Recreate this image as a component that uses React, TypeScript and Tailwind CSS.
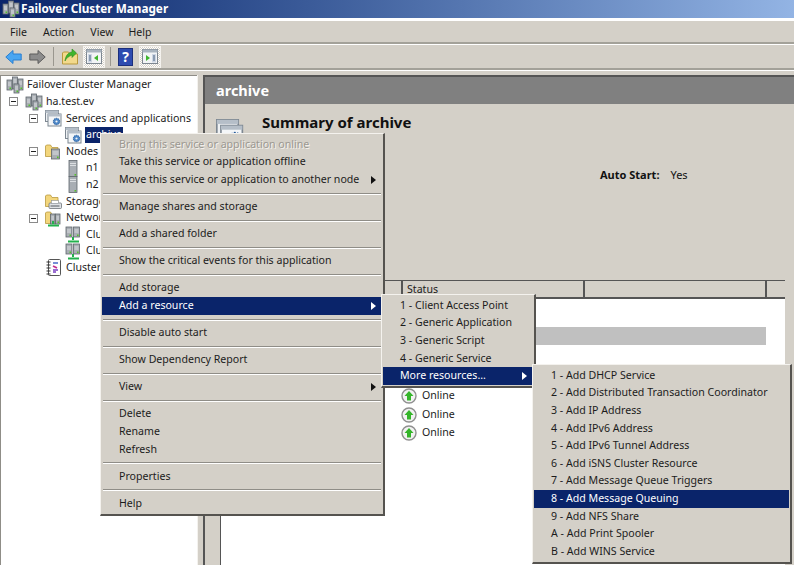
const font = "font-['Noto_Sans','Liberation_Sans',Arial,sans-serif]"

function Arrow({ white }: { white?: boolean }) {
  return (
    <svg width="5" height="8" viewBox="0 0 5 8" className="shrink-0">
      <path d="M0 0L5 4L0 8Z" fill={white ? "#ffffff" : "#111111"} />
    </svg>
  )
}

function ServerBlock({ x, y, w = 6, h = 13 }: { x: number; y: number; w?: number; h?: number }) {
  return (
    <g>
      <rect x={x} y={y} width={w} height={h} fill="#a9aeb4" stroke="#5f666d" strokeWidth="0.8" />
      <path d={`M${x + 1} ${y + 3}h${w - 2}M${x + 1} ${y + 5}h${w - 2}`} stroke="#e8eaec" strokeWidth="0.8" />
      <rect x={x + w - 2.5} y={y + h - 2.5} width="1.6" height="1.6" fill="#55c22c" />
    </g>
  )
}

function ClusterIcon() {
  return (
    <svg width="18" height="18" viewBox="0 0 18 18" className="shrink-0">
      <ServerBlock x={1} y={4} w={5} h={10} />
      <ServerBlock x={6.5} y={1} w={5} h={12} />
      <ServerBlock x={12} y={3} w={5} h={11} />
      <ServerBlock x={8} y={8} w={5} h={9} />
    </svg>
  )
}

function WindowGear({ size = 17 }: { size?: number }) {
  return (
    <svg width={size} height={size} viewBox="0 0 17 17" className="shrink-0">
      <rect x="0.5" y="0.5" width="13" height="11" fill="#eef1f4" stroke="#7d8791" />
      <rect x="0.5" y="0.5" width="13" height="2.5" fill="#b5bec8" />
      <rect x="3" y="4" width="13" height="12" fill="#f4f6f8" stroke="#7d8791" />
      <rect x="3" y="4" width="13" height="2.5" fill="#b5bec8" />
      <circle cx="11.5" cy="11.5" r="3.2" fill="#4c86c6" stroke="#2a5f9e" strokeDasharray="1.2 0.8" />
      <circle cx="11.5" cy="11.5" r="1.1" fill="#f4f6f8" />
    </svg>
  )
}

function Folder() {
  return (
    <path d="M0.5 3V13.5H13V4.5H7L5.5 2H1.5Z" fill="#f3d67c" stroke="#b9993f" strokeWidth="0.8" />
  )
}

function FolderServer() {
  return (
    <svg width="16" height="17" viewBox="0 0 16 17" className="shrink-0">
      <Folder />
      <ServerBlock x={6.5} y={6} w={8} h={10} />
    </svg>
  )
}

function TallServer() {
  return (
    <svg width="10" height="17" viewBox="0 0 10 17" className="shrink-0">
      <ServerBlock x={1} y={0.5} w={8} h={16} />
    </svg>
  )
}

function FolderPrinter() {
  return (
    <svg width="17" height="17" viewBox="0 0 17 17" className="shrink-0">
      <Folder />
      <rect x="4" y="10" width="12.5" height="5.5" rx="1" fill="#dfe2e5" stroke="#6d7379" strokeWidth="0.8" />
      <rect x="6.5" y="7.5" width="7" height="3" fill="#ffffff" stroke="#8d9399" strokeWidth="0.6" />
      <path d="M5.5 13h9" stroke="#555b60" strokeWidth="1" />
    </svg>
  )
}

function NetPair({ folder }: { folder?: boolean }) {
  return (
    <svg width="16" height="17" viewBox="0 0 16 17" className="shrink-0">
      {folder ? <Folder /> : null}
      <ServerBlock x={folder ? 5.5 : 1} y={folder ? 4 : 1} w={folder ? 4.5 : 6} h={10} />
      <ServerBlock x={folder ? 10.5 : 8.5} y={folder ? 4 : 1} w={folder ? 4.5 : 6} h={10} />
      <path d="M8 11V14M3 15.5H14" stroke="#22b14c" strokeWidth="2" />
    </svg>
  )
}

function Notebook() {
  return (
    <svg width="15" height="17" viewBox="0 0 15 17" className="shrink-0">
      <rect x="2.5" y="0.5" width="12" height="16" rx="1" fill="#ffffff" stroke="#555555" />
      <path d="M0.5 3h4M0.5 6h4M0.5 9h4M0.5 12h4M0.5 15h4" stroke="#333333" />
      <path d="M7 4h5" stroke="#3b5fc4" strokeWidth="1.4" />
      <path d="M7 7l4 2" stroke="#c42b8e" strokeWidth="1.6" />
      <path d="M7 11h5M7 13h3" stroke="#7a3fc4" strokeWidth="1.4" />
    </svg>
  )
}

function Expander() {
  return (
    <span className="flex h-[9px] w-[9px] shrink-0 items-center justify-center border border-[#8a8a8a] bg-white">
      <span className="h-px w-[5px] bg-[#222222]" />
    </span>
  )
}

function PanelButton({ right }: { right?: boolean }) {
  return (
    <div className="flex h-[22px] w-[22px] items-center justify-center border border-[#f4f2ee] bg-[repeating-conic-gradient(#ffffff_0_25%,#d4d0c8_0_50%)] bg-[length:2px_2px]">
      <svg width="16" height="15" viewBox="0 0 16 15">
        <rect x="0.5" y="0.5" width="15" height="14" fill="#f2f4f6" stroke="#7d8791" />
        <rect x="0.5" y="0.5" width="15" height="3" fill="#a9b4bf" />
        {right ? (
          <>
            <path d="M4 6l4 3l-4 3Z" fill="#3fb52e" />
            <rect x="10" y="5" width="4" height="8.5" fill="#cdd6e4" />
            <path d="M11 7h2M11 9h2M11 11h2" stroke="#48607f" />
          </>
        ) : (
          <>
            <rect x="2" y="5" width="4" height="8.5" fill="#cdd6e4" />
            <path d="M3 7h2M3 9h2M3 11h2" stroke="#48607f" />
            <path d="M12 6l-4 3l4 3Z" fill="#3fb52e" />
          </>
        )}
      </svg>
    </div>
  )
}

function Toolbar() {
  return (
    <div className="flex h-[22px] items-center pl-[5px]">
      <svg width="17" height="16" viewBox="0 0 17 16">
        <path d="M0.8 8L8 1.5V5H16.2V11H8V14.5Z" fill="#49a6f2" stroke="#2a7fd0" />
      </svg>
      <svg width="17" height="16" viewBox="0 0 17 16" className="ml-[7px]">
        <path d="M16.2 8L9 1.5V5H0.8V11H9V14.5Z" fill="#8c8c8c" stroke="#5c5c5c" />
      </svg>
      <div className="ml-[7px] h-[19px] w-px bg-[#9a978f]" />
      <svg width="16" height="17" viewBox="0 0 16 17" className="ml-[8px]">
        <path d="M0.5 5V16H15.5V6H8L6.5 4H1.5Z" fill="#f2d98c" stroke="#b9993f" />
        <path d="M3 13C5 9 8 8 10 7V9.5L14.5 5L10 1V4C6 4.5 3.5 8 3 13Z" fill="#3fb52e" stroke="#2c8a1e" strokeWidth="0.6" />
      </svg>
      <div className="ml-[5px]">
        <PanelButton />
      </div>
      <div className="ml-[5px] h-[19px] w-px bg-[#9a978f]" />
      <div className="ml-[7px] flex h-[18px] w-[15px] items-center justify-center border border-[#1c2f7c] bg-[#2e4bb0] text-[14px] font-bold leading-none text-white">
        ?
      </div>
      <div className="ml-[6px]">
        <PanelButton right />
      </div>
    </div>
  )
}

const tree = [
  { label: "Failover Cluster Manager", icon: <ClusterIcon />, pad: "pl-[5px]", gap: "ml-[3px]" },
  { label: "ha.test.ev", icon: <ClusterIcon />, pad: "pl-[8px]", exp: true, gap: "ml-[3px]" },
  { label: "Services and applications", icon: <WindowGear />, pad: "pl-[28px]", exp: true, gap: "ml-[4px]" },
  { label: "archive", icon: <WindowGear />, pad: "pl-[64px]", selected: true, gap: "ml-[3px]" },
  { label: "Nodes", icon: <FolderServer />, pad: "pl-[28px]", exp: true, gap: "ml-[5px]" },
  { label: "n1", icon: <TallServer />, pad: "pl-[67px]", gap: "ml-[8px]" },
  { label: "n2", icon: <TallServer />, pad: "pl-[67px]", gap: "ml-[8px]" },
  { label: "Storage", icon: <FolderPrinter />, pad: "pl-[44px]", gap: "ml-[4px]" },
  { label: "Networks", icon: <NetPair folder />, pad: "pl-[28px]", exp: true, gap: "ml-[5px]" },
  { label: "Cluster Network 1", icon: <NetPair />, pad: "pl-[64px]", gap: "ml-[5px]" },
  { label: "Cluster Network 2", icon: <NetPair />, pad: "pl-[64px]", gap: "ml-[5px]" },
  { label: "Cluster Events", icon: <Notebook />, pad: "pl-[45px]", gap: "ml-[5px]" },
]

function Tree() {
  return (
    <div className="h-full w-[197px] shrink-0 overflow-hidden border-l border-t border-[#8f8d87] bg-white pt-px text-[10.6px] text-[#1c1c1c]">
      {tree.map((t) => (
        <div key={t.label} className={`flex h-[16.6px] items-center whitespace-nowrap ${t.pad}`}>
          {t.exp ? (
            <>
              <Expander />
              <span className="w-[7px] shrink-0" />
            </>
          ) : null}
          {t.icon}
          <span className={`${t.gap} ${t.selected ? "bg-[#0a246a] px-px text-white" : ""}`}>{t.label}</span>
        </div>
      ))}
    </div>
  )
}

function Summary() {
  return (
    <div className="h-[176px] shrink-0 pl-[11px] pt-[11px] text-[#111111]">
      <div className="flex">
        <div className="mt-[4px]">
          <WindowGear size={28} />
        </div>
        <h2 className="ml-[18px] text-[15px] font-bold leading-[15px]">Summary of archive</h2>
      </div>
      <div className="mt-[20px] flex pl-[384px] text-[11px]">
        <span className="font-bold">Auto Start:</span>
        <span className="ml-[11px]">Yes</span>
      </div>
    </div>
  )
}

function OnlineRow() {
  return (
    <div className="flex h-[18.5px] items-center pl-[180px] text-[10.6px] text-[#1c1c1c]">
      <svg width="16" height="16" viewBox="0 0 16 16" className="shrink-0">
        <circle cx="8" cy="8" r="7" fill="#f2f2f2" stroke="#8f8f8f" strokeWidth="1.4" />
        <path d="M8 3L12.5 8H10V12.5H6V8H3.5Z" fill="#35b52a" />
      </svg>
      <span className="ml-[5px]">Online</span>
    </div>
  )
}

function ResourceList() {
  return (
    <div className="ml-[15px] mr-[9px] flex min-h-0 flex-1 flex-col border-l border-t border-[#555555] bg-white">
      <div className="flex h-[18px] shrink-0 border-b-2 border-[#555555] bg-[#d4d0c8] text-[10.6px] text-[#1c1c1c]">
        <div className="w-[182px] shrink-0 border-r-2 border-[#555555]" />
        <div className="w-[182px] shrink-0 border-r-2 border-[#555555] pl-[4px] leading-[16px]">Status</div>
        <div className="w-[182px] shrink-0 border-r-2 border-[#555555]" />
        <div className="flex-1" />
      </div>
      <div className="mr-[19px] mt-[28px] h-[18px] shrink-0 bg-[#c0c0c0]" />
      <div className="h-[42px] shrink-0" />
      <OnlineRow />
      <OnlineRow />
      <OnlineRow />
    </div>
  )
}

type Entry = { label?: string; sep?: boolean; disabled?: boolean; active?: boolean; arrow?: boolean }

const contextMenu: Entry[] = [
  { label: "Bring this service or application online", disabled: true },
  { label: "Take this service or application offline" },
  { label: "Move this service or application to another node", arrow: true },
  { sep: true },
  { label: "Manage shares and storage" },
  { sep: true },
  { label: "Add a shared folder" },
  { sep: true },
  { label: "Show the critical events for this application" },
  { sep: true },
  { label: "Add storage" },
  { label: "Add a resource", active: true, arrow: true },
  { sep: true },
  { label: "Disable auto start" },
  { sep: true },
  { label: "Show Dependency Report" },
  { sep: true },
  { label: "View", arrow: true },
  { sep: true },
  { label: "Delete" },
  { label: "Rename" },
  { label: "Refresh" },
  { sep: true },
  { label: "Properties" },
  { sep: true },
  { label: "Help" },
]

const resourceMenu: Entry[] = [
  { label: "1 - Client Access Point" },
  { label: "2 - Generic Application" },
  { label: "3 - Generic Script" },
  { label: "4 - Generic Service" },
  { label: "More resources...", active: true, arrow: true },
]

const moreMenu: Entry[] = [
  { label: "1 - Add DHCP Service" },
  { label: "2 - Add Distributed Transaction Coordinator" },
  { label: "3 - Add IP Address" },
  { label: "4 - Add IPv6 Address" },
  { label: "5 - Add IPv6 Tunnel Address" },
  { label: "6 - Add iSNS Cluster Resource" },
  { label: "7 - Add Message Queue Triggers" },
  { label: "8 - Add Message Queuing", active: true },
  { label: "9 - Add NFS Share" },
  { label: "A - Add Print Spooler" },
  { label: "B - Add WINS Service" },
]

function Menu({ items, className }: { items: Entry[]; className: string }) {
  return (
    <div
      className={`absolute border border-b-2 border-r-2 border-b-[#55534f] border-l-[#f4f2ee] border-r-[#55534f] border-t-[#f4f2ee] bg-[#d4d0c8] p-px pt-[2px] text-[10.6px] text-[#1c1c1c] ${className}`}
    >
      {items.map((item, idx) =>
        item.sep ? (
          <div key={idx} className="flex h-[9.5px] flex-col justify-center px-[1px]">
            <div className="h-px bg-[#8f8d87]" />
            <div className="h-px bg-white" />
          </div>
        ) : (
          <div
            key={idx}
            className={`flex h-[17.6px] items-center justify-between whitespace-nowrap pl-[17px] pr-[6px] ${
              item.active ? "bg-[#0a246a] text-white" : ""
            } ${item.disabled ? "text-[#9b9891] [text-shadow:1px_1px_0_#f4f2ee]" : ""}`}
          >
            <span>{item.label}</span>
            {item.arrow ? <Arrow white={item.active} /> : null}
          </div>
        ),
      )}
    </div>
  )
}

export default function App() {
  return (
    <div className={`relative flex h-[565px] w-[794px] flex-col overflow-hidden bg-[#d4d0c8] ${font}`}>
      <div className="flex h-[18px] shrink-0 items-center bg-gradient-to-r from-[#0a246a] to-[#93b4e4] pl-[2px] text-[11.75px] font-bold text-white">
        <ClusterIcon />
        <span className="ml-[1px]">Failover Cluster Manager</span>
      </div>
      <div className="flex h-[26px] shrink-0 items-center border-b-2 border-t-[3px] border-b-[#a3a199] border-t-white pl-[10px] pt-[3px] text-[10.6px] text-[#1c1c1c]">
        <span>File</span>
        <span className="ml-[16px]">Action</span>
        <span className="ml-[16px]">View</span>
        <span className="ml-[15px]">Help</span>
      </div>
      <div className="flex h-[26px] shrink-0 items-center border-b-2 border-t border-b-[#a3a199] border-t-white">
        <Toolbar />
      </div>
      <div className="h-[5px] shrink-0 border-t border-white" />
      <div className="flex min-h-0 flex-1">
        <Tree />
        <div className="w-[6px] shrink-0 border-l border-[#f4f2ee]" />
        <div className="flex min-w-0 flex-1 flex-col border-l-2 border-t-2 border-[#555555]">
          <div className="flex h-[27px] shrink-0 items-center bg-[#808080] pl-[11px] text-[14.5px] font-bold text-white">
            archive
          </div>
          <Summary />
          <ResourceList />
        </div>
      </div>
      <Menu items={contextMenu} className="left-[100px] top-[133px] w-[285px]" />
      <Menu items={resourceMenu} className="left-[381px] top-[294px] w-[155px]" />
      <Menu items={moreMenu} className="left-[532px] top-[364px] w-[260px]" />
    </div>
  )
}
